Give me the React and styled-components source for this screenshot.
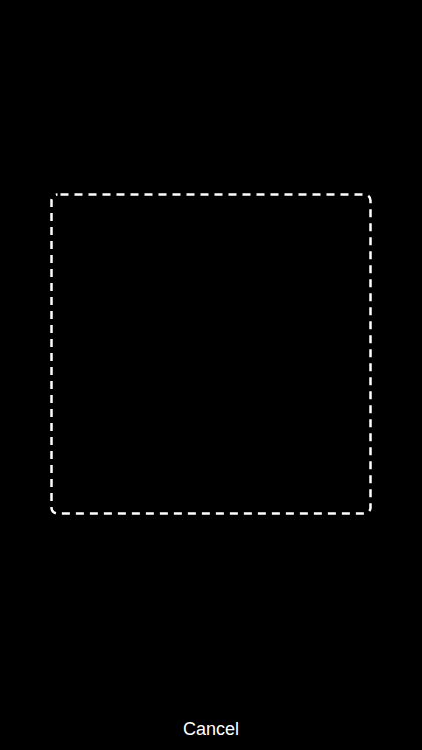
import React from 'react'
import styled, { createGlobalStyle } from 'styled-components'

const GlobalStyle = createGlobalStyle`
  html, body {
    margin: 0;
    padding: 0;
    background: #000;
  }
  body {
    font-family: "Liberation Sans", Arial, sans-serif;
  }
`

const Screen = styled.div`
  display: flex;
  flex-direction: column;
  width: 422px;
  height: 750px;
  background: #000;
  overflow: hidden;
`

const Viewfinder = styled.div`
  flex: 1;
  display: flex;
  align-items: center;
  justify-content: center;
`

const ScanFrame = styled.div`
  width: ${props => props.size}px;
  height: ${props => props.size}px;

  svg {
    display: block;
  }
`

const BottomBar = styled.div`
  height: 42px;
  display: flex;
  align-items: center;
  justify-content: center;
`

const CancelButton = styled.button`
  background: none;
  border: none;
  padding: 0;
  color: #fff;
  font-family: "Liberation Sans", Arial, sans-serif;
  font-size: 18px;
  cursor: pointer;
`

const FrameOutline = ({ size }) => (
  <svg width={size} height={size} viewBox={`0 0 ${size} ${size}`}>
    <rect
      x="1.5"
      y="1.5"
      width={size - 3}
      height={size - 3}
      rx="6"
      fill="none"
      stroke="#fff"
      strokeWidth="2.5"
      strokeDasharray="8 6"
      strokeDashoffset="-3"
    />
  </svg>
)

export default function App() {
  return (
    <>
      <GlobalStyle />
      <Screen>
        <Viewfinder>
          <ScanFrame size={322}>
            <FrameOutline size={322} />
          </ScanFrame>
        </Viewfinder>
        <BottomBar>
          <CancelButton>Cancel</CancelButton>
        </BottomBar>
      </Screen>
    </>
  )
}
